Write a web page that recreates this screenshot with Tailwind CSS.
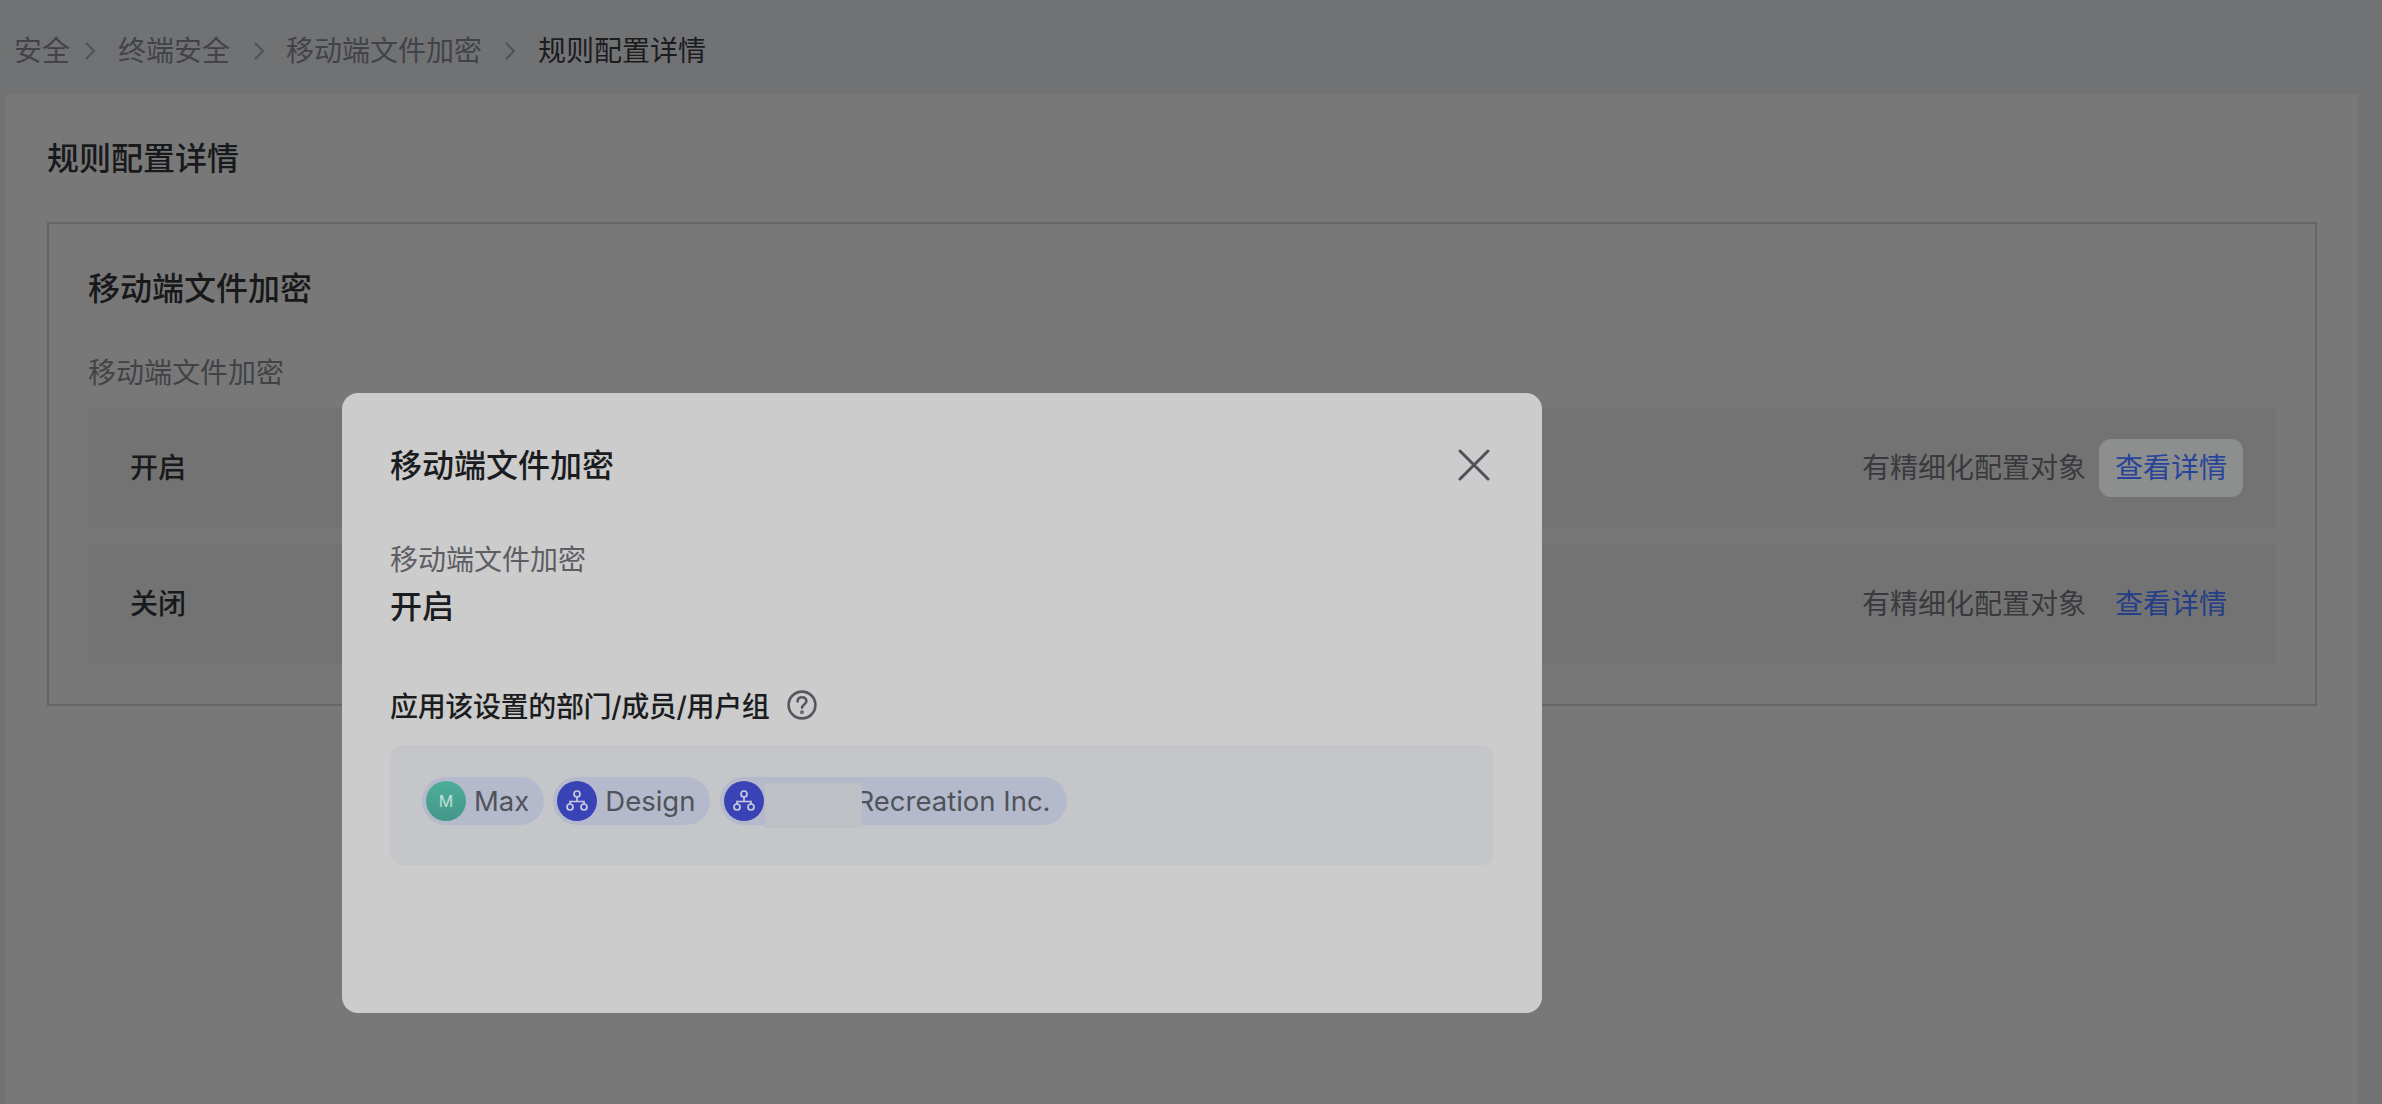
<!DOCTYPE html>
<html lang="zh-CN">
<head>
  <meta charset="UTF-8">
  <title>规则配置详情</title>
  <script src="https://cdn.jsdelivr.net/npm/@tailwindcss/browser@4"></script>
</head>
<body class="w-[2382px] h-[1104px] overflow-hidden relative bg-[#717274] font-['Inter','Noto_Sans_CJK_SC',sans-serif]">

  <!-- Breadcrumb -->
  <div class="h-[94px] flex items-center pl-[14px] pt-[8px] text-[28px] leading-[36px] text-[#414346]">
    <span>安全</span>
    <svg class="ml-[12px] mr-[20px] w-[16px] h-[24px]" viewBox="0 0 16 24" fill="none" stroke="#505256" stroke-width="2"><path d="M4 4l8 8-8 8"/></svg>
    <span>终端安全</span>
    <svg class="ml-[21px] mr-[19px] w-[16px] h-[24px]" viewBox="0 0 16 24" fill="none" stroke="#505256" stroke-width="2"><path d="M4 4l8 8-8 8"/></svg>
    <span>移动端文件加密</span>
    <svg class="ml-[20px] mr-[20px] w-[16px] h-[24px]" viewBox="0 0 16 24" fill="none" stroke="#505256" stroke-width="2"><path d="M4 4l8 8-8 8"/></svg>
    <span class="text-[#1b1c1e]">规则配置详情</span>
  </div>

  <!-- Content -->
  <div class="ml-[6px] mr-[24px] h-[1010px] bg-[#787878] pl-[41px] pr-[41px] pt-[45px]">
    <h2 class="text-[32px] leading-[40px] font-medium text-[#18191b]">规则配置详情</h2>

    <div class="mt-[43px] border-2 border-[#666666] pl-[39px] pr-[39px] pt-[45px] pb-[40px]">
      <h3 class="text-[32px] leading-[40px] font-medium text-[#18191b]">移动端文件加密</h3>
      <p class="mt-[46px] text-[28px] leading-[36px] text-[#414346]">移动端文件加密</p>

      <div class="mt-[17px] h-[120px] bg-[#737373] flex items-center pl-[42px] pr-[33px]">
        <span class="text-[28px] leading-[36px] font-medium text-[#18191b]">开启</span>
        <span class="ml-auto text-[28px] leading-[36px] text-[#383a3d]">有精细化配置对象</span>
        <button class="ml-[13px] h-[58px] px-[16px] rounded-[12px] bg-[#8c8f8d] text-[28px] leading-[36px] text-[#28449a]">查看详情</button>
      </div>

      <div class="mt-[16px] h-[120px] bg-[#737373] flex items-center pl-[42px] pr-[33px]">
        <span class="text-[28px] leading-[36px] font-medium text-[#18191b]">关闭</span>
        <span class="ml-auto text-[28px] leading-[36px] text-[#383a3d]">有精细化配置对象</span>
        <button class="ml-[13px] h-[58px] px-[16px] text-[28px] leading-[36px] text-[#243e88]">查看详情</button>
      </div>
    </div>
  </div>

  <!-- Modal -->
  <div class="absolute left-[342px] top-[393px] w-[1200px] h-[620px] rounded-[16px] bg-[#cccccc] pl-[48px] pr-[48px] pt-[53px]">
    <svg class="absolute right-[52px] top-[56px] w-[32px] h-[32px]" viewBox="0 0 32 32" fill="none" stroke="#4f5159" stroke-width="3" stroke-linecap="round"><path d="M2 2l28 28M30 2L2 30"/></svg>

    <h3 class="text-[32px] leading-[40px] font-medium text-[#1b1c20]">移动端文件加密</h3>
    <p class="mt-[56px] text-[28px] leading-[36px] text-[#5c5e64]">移动端文件加密</p>
    <p class="mt-[9px] text-[32px] leading-[40px] font-medium text-[#1b1c20]">开启</p>

    <div class="mt-[62px] flex items-center">
      <span class="text-[28px] leading-[36px] tracking-[-0.35px] font-medium text-[#1b1c20]">应用该设置的部门/成员/用户组</span>
      <svg class="ml-[18px] -mt-[4px] w-[30px] h-[30px]" viewBox="0 0 30 30" fill="none" stroke="#55575e" stroke-width="2.6" stroke-linecap="round">
        <circle cx="15" cy="15" r="13.4"/>
        <path d="M10.6 11.4c0-2.6 2-4.2 4.4-4.2s4.4 1.6 4.4 4c0 3.2-4.4 3.4-4.4 6.6"/>
        <circle cx="15" cy="22.2" r="0.6" fill="#55575e"/>
      </svg>
    </div>

    <div class="mt-[20px] h-[120px] rounded-[12px] bg-[#c5c6c9] pl-[32px] pt-[32px] flex items-start text-[27.5px] leading-[36px] text-[#50535a]">
      <div class="h-[48px] rounded-full bg-[#b4bacb] flex items-center pl-[4px] pr-[15px] gap-[8px]">
        <div class="w-[40px] h-[40px] rounded-full bg-gradient-to-b from-[#4cae98] to-[#44978a] flex items-center justify-center text-[16px] text-[#bfe0d8]">M</div>
        <span>Max</span>
      </div>
      <div class="ml-[9px] h-[48px] rounded-full bg-[#b4bacb] flex items-center pl-[4px] pr-[15px] gap-[8px]">
        <div class="w-[40px] h-[40px] rounded-full bg-[#3a43b6]">
          <svg class="w-[40px] h-[40px]" viewBox="0 0 40 40" fill="none" stroke="#c7cbe0" stroke-width="1.7"><circle cx="20" cy="13" r="3"/><circle cx="13" cy="26" r="3"/><circle cx="27" cy="26" r="3"/><path d="M20 16v4.5M13 23v-2.5h14V23"/></svg>
        </div>
        <span>Design</span>
      </div>
      <div class="ml-[10px] relative h-[48px] rounded-full bg-[#b4bacb] flex items-center pl-[4px] pr-[16px] gap-[8px]">
        <div class="w-[40px] h-[40px] rounded-full bg-[#3a43b6]">
          <svg class="w-[40px] h-[40px]" viewBox="0 0 40 40" fill="none" stroke="#c7cbe0" stroke-width="1.7"><circle cx="20" cy="13" r="3"/><circle cx="13" cy="26" r="3"/><circle cx="27" cy="26" r="3"/><path d="M20 16v4.5M13 23v-2.5h14V23"/></svg>
        </div>
        <span class="pl-[84px]">Recreation Inc.</span>
        <div class="absolute left-[45px] top-[6px] w-[97px] h-[45px] bg-[#bfc0c5]"></div>
      </div>
    </div>
  </div>

</body>
</html>
